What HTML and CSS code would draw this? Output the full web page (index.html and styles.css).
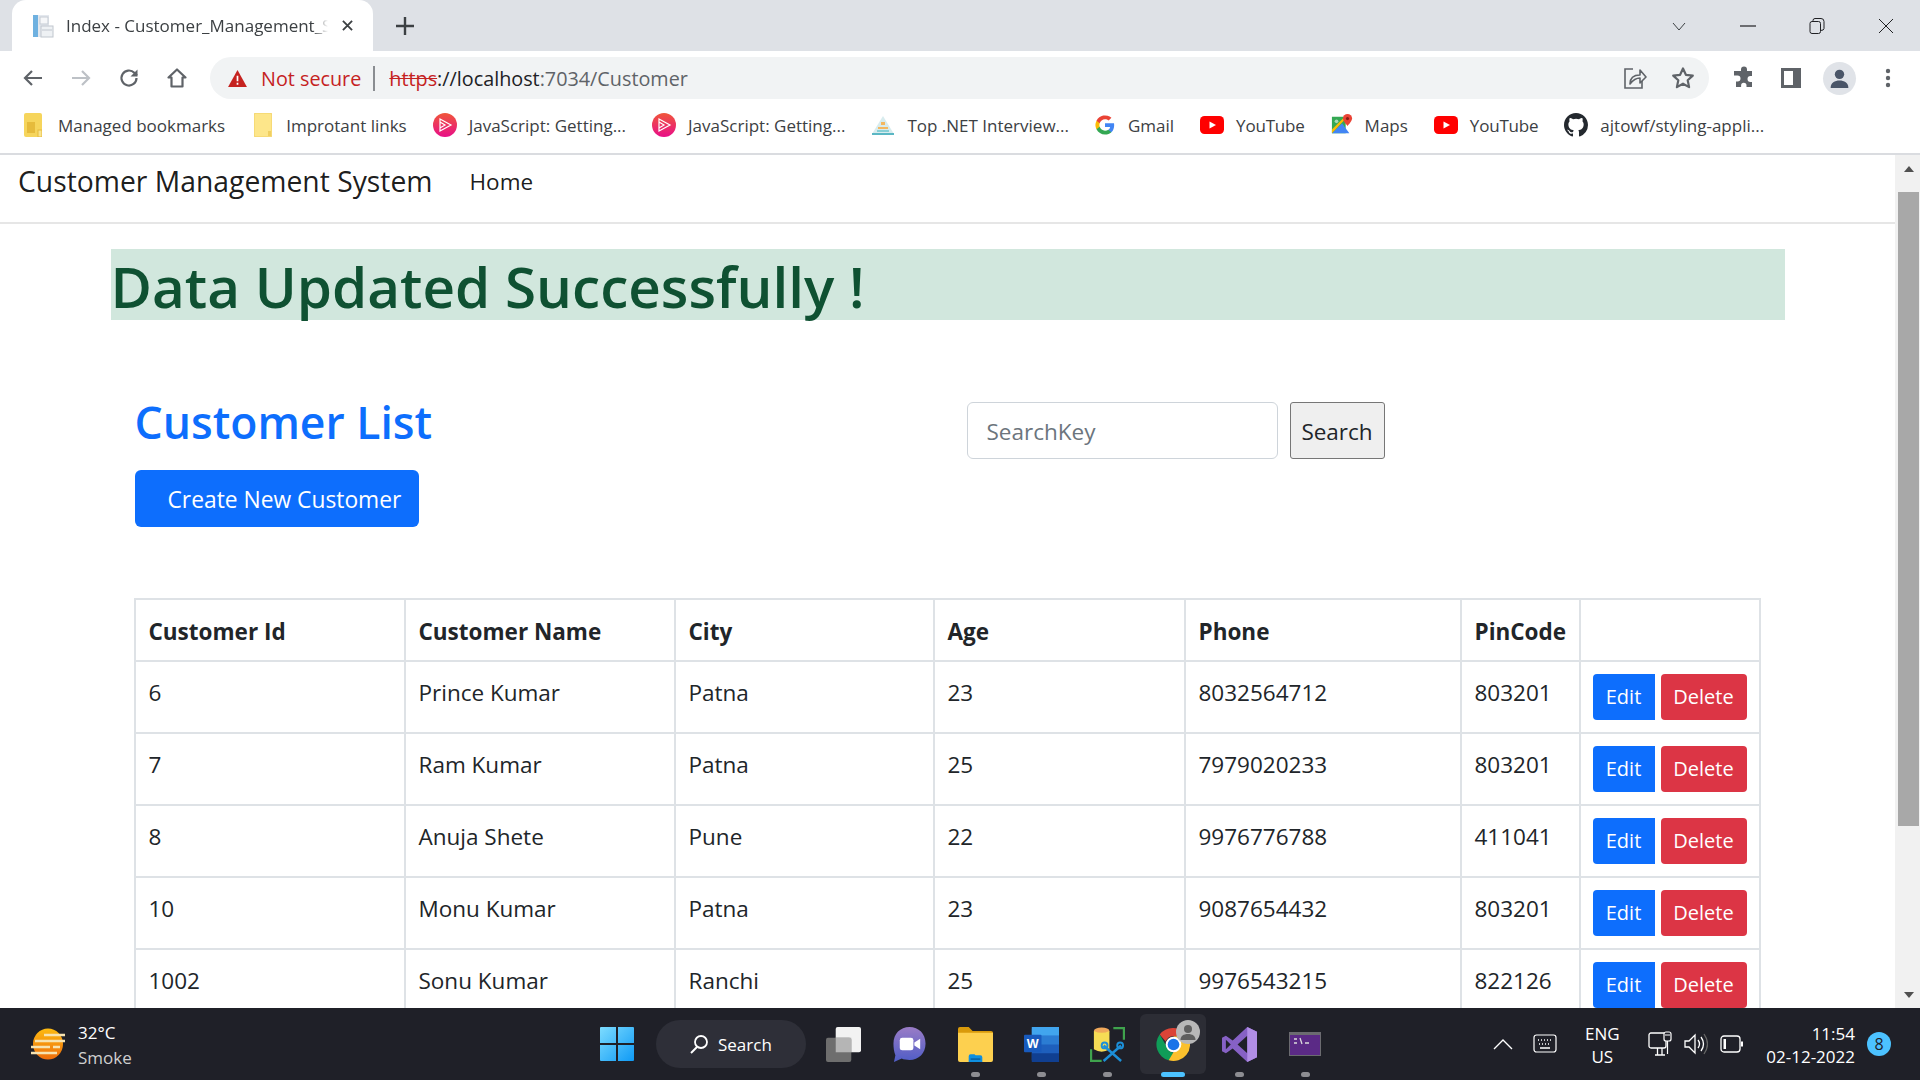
FILE: index.html
```html
<!DOCTYPE html>
<html lang="en">
<head>
    <meta charset="UTF-8">
    <title>Index - Customer_Management_System</title>
    <link rel="stylesheet" href="styles.css">
</head>
<body>
    <!-- Browser tab strip -->
    <div class="tabstrip">
        <div class="tab">
            <svg class="favicon" viewBox="0 0 24 24"><rect x="3" y="1" width="16" height="22" fill="#e4e8ee"/><rect x="3" y="1" width="5" height="22" fill="#6fb1e0"/><rect x="10" y="3" width="8" height="7" fill="#f6f7f9" stroke="#c5cbd3"/><rect x="11" y="12" width="12" height="11" fill="#eef1f4" stroke="#c0c6ce"/><path d="M12 16h10" stroke="#c0c6ce"/></svg>
            <span class="tab-title">Index - Customer_Management_S</span>
            <svg class="tab-close" viewBox="0 0 12 12"><path d="M1 1l10 10M11 1L1 11" stroke="#3c4043" stroke-width="2"/></svg>
        </div>
        <svg class="new-tab" viewBox="0 0 18 18"><path d="M9 0v18M0 9h18" stroke="#3c4043" stroke-width="2.4"/></svg>
        <div class="window-controls">
            <svg viewBox="0 0 16 16"><path d="M2 5l6 7 6-7" fill="none" stroke="#3c4043"/></svg>
            <svg viewBox="0 0 16 16"><path d="M0 8h16" stroke="#202124" stroke-width="1.2"/></svg>
            <svg viewBox="0 0 16 16"><rect x="1" y="3.5" width="10.5" height="12" rx="2" fill="none" stroke="#202124"/><path d="M4 3.5V2.5q0-2 2-2h6q3 0 3 3v7q0 2-3.500 2" fill="none" stroke="#202124"/></svg>
            <svg viewBox="0 0 16 16"><path d="M1 1l14 14M15 1L1 15" stroke="#202124"/></svg>
        </div>
    </div>

    <!-- Address bar -->
    <div class="toolbar">
        <svg class="tool-icon" viewBox="0 0 24 24"><path d="M21 12H4M11 5l-7 7 7 7" fill="none" stroke="#5f6368" stroke-width="2.200"/></svg>
        <svg class="tool-icon" viewBox="0 0 24 24"><path d="M3 12h17M13 5l7 7-7 7" fill="none" stroke="#bdc1c6" stroke-width="2.200"/></svg>
        <svg class="tool-icon" viewBox="0 0 24 24"><path d="M19.500 12a7.500 7.500 0 1 1-2.200-5.300L20 9.500" fill="none" stroke="#5f6368" stroke-width="2.200"/><path d="M20.500 3.500v7h-7z" fill="#5f6368"/></svg>
        <svg class="tool-icon" viewBox="0 0 24 24"><path d="M12 3.500L3.500 11.500H6.500V20.500H17.500V11.500H20.500Z" fill="none" stroke="#5f6368" stroke-width="2.200" stroke-linejoin="round"/></svg>
        <div class="omnibox">
            <svg class="warn-icon" viewBox="0 0 20 18"><path d="M10 0L20 18H0Z" fill="#c5221f"/><path d="M10 6v6M10 13.500v2" stroke="#fff" stroke-width="1.800"/></svg>
            <span class="not-secure">Not secure</span>
            <span class="omni-sep"></span>
            <span class="url"><span class="url-scheme">https</span><span class="url-host">://localhost</span>:7034/Customer</span>
            <svg class="omni-icon omni-share" viewBox="0 0 24 24"><path d="M10 3H2v19h17v-7" fill="none" stroke="#5f6368" stroke-width="1.600"/><path d="M7 18c0-6 4-9 10-9V4l6 7-6 6v-5c-4 0-7 2-10 6z" fill="none" stroke="#5f6368" stroke-width="1.600" stroke-linejoin="round"/></svg>
            <svg class="omni-icon" viewBox="0 0 24 24"><path d="M12 2.500l2.900 6.300 6.900.8-5.100 4.700 1.400 6.800-6.100-3.400-6.100 3.400 1.400-6.800L2.200 9.600l6.900-.8z" fill="none" stroke="#5f6368" stroke-width="2.200" stroke-linejoin="round"/></svg>
        </div>
        <svg class="tool-icon ext" viewBox="0 0 24 24"><path d="M9 4.500a3 3 0 0 1 6 0V6h5v5h-1.500a3 3 0 0 0 0 6H20v5h-5.500v-1.500a2.700 2.700 0 0 0-5.400 0V22H4v-5.500h1.500a3 3 0 0 0 0-6H2V6h7z" fill="#5f6368" transform="translate(1 -1)"/></svg>
        <svg class="tool-icon" viewBox="0 0 24 24"><rect x="2" y="2" width="20" height="20" fill="#5f6368"/><rect x="5" y="5" width="9" height="14" fill="#fff"/></svg>
        <div class="avatar"><svg viewBox="0 0 24 24"><circle cx="12" cy="8" r="4.500" fill="#4a5568"/><path d="M3.500 21c0-5 4-7 8.500-7s8.500 2 8.500 7z" fill="#4a5568"/></svg></div>
        <svg class="tool-icon" viewBox="0 0 24 24"><circle cx="12" cy="5" r="2.200" fill="#5f6368"/><circle cx="12" cy="12" r="2.200" fill="#5f6368"/><circle cx="12" cy="19" r="2.200" fill="#5f6368"/></svg>
    </div>

    <!-- Bookmarks -->
    <div class="bookmarks">
        <a class="bookmark">
            <svg class="bm-folder" viewBox="0 0 18 24"><rect width="18" height="24" rx="2" fill="#f6d55c"/><rect x="3" y="9" width="8" height="11" fill="#e6bb3c"/><rect x="14" y="17" width="4" height="7" fill="#f9e48f" stroke="#e6bb3c"/></svg>
            Managed bookmarks
        </a>
        <a class="bookmark">
            <svg class="bm-folder bm-folder-plain" viewBox="0 0 18 24"><rect width="18" height="24" rx="2" fill="#fde68a" stroke="#f0cf62"/><rect x="14" y="18" width="3" height="5" fill="#f0cf62"/></svg>
            Improtant links
        </a>
        <a class="bookmark">
            <svg class="bm-icon" viewBox="0 0 24 24"><defs><linearGradient id="ps" x1="0" y1="0" x2="0" y2="1"><stop offset="0" stop-color="#f0563a"/><stop offset="1" stop-color="#e80f88"/></linearGradient></defs><circle cx="12" cy="12" r="12" fill="url(#ps)"/><path d="M7 6l11 6-11 6zM7 9l5 3-5 3" fill="none" stroke="#fff" stroke-width="1.200"/></svg>
            JavaScript: Getting...
        </a>
        <a class="bookmark">
            <svg class="bm-icon" viewBox="0 0 24 24"><circle cx="12" cy="12" r="12" fill="url(#ps)"/><path d="M7 6l11 6-11 6zM7 9l5 3-5 3" fill="none" stroke="#fff" stroke-width="1.200"/></svg>
            JavaScript: Getting...
        </a>
        <a class="bookmark">
            <svg class="bm-icon" viewBox="0 0 24 24"><path d="M12 3l11 18H1z" fill="#d8ecee"/><path d="M10 9h4v3h-4z" fill="#f4b860"/><path d="M7 14h10v2H7z" fill="#f4b860"/><path d="M1 20h22v2H1z" fill="#5bb7c4"/><path d="M6 17h12v2H6z" fill="#87cfd6"/></svg>
            Top .NET Interview...
        </a>
        <a class="bookmark">
            <svg class="bm-icon bm-google" viewBox="0 0 24 24"><path d="M23 12.300c0-.800-.1-1.600-.2-2.300H12v4.400h6.200a5.300 5.300 0 0 1-2.300 3.500v2.900h3.700c2.200-2 3.400-5 3.400-8.500z" fill="#4285f4"/><path d="M12 23.500c3.100 0 5.700-1 7.600-2.800l-3.700-2.900c-1 .7-2.300 1.100-3.900 1.100-3 0-5.500-2-6.400-4.700H1.800v3c1.900 3.800 5.800 6.300 10.200 6.300z" fill="#34a853"/><path d="M5.600 14.200a7 7 0 0 1 0-4.400v-3H1.800a11.500 11.500 0 0 0 0 10.400z" fill="#fbbc05"/><path d="M12 5c1.700 0 3.200.6 4.400 1.700l3.300-3.300A11.500 11.500 0 0 0 1.800 6.800l3.800 3C6.500 7 9 5 12 5z" fill="#ea4335"/></svg>
            Gmail
        </a>
        <a class="bookmark bm-yt">
            <svg class="bm-icon" viewBox="0 0 24 24"><rect y="3" width="24" height="18" rx="4.500" fill="#f00"/><path d="M9.500 8.500l6.500 3.500-6.500 3.500z" fill="#fff"/></svg>
            YouTube
        </a>
        <a class="bookmark">
            <svg class="bm-icon bm-maps" viewBox="0 0 24 24"><path d="M1 3h15v18H1z" fill="#34a853"/><path d="M1 21L12 10l8 11z" fill="#4285f4"/><path d="M1 17L15 3h3L1 21z" fill="#fbbc05"/><circle cx="6" cy="8" r="2" fill="#a8dab5"/><path d="M18 0a5 5 0 0 1 5 5c0 3-5 8-5 8s-5-5-5-8a5 5 0 0 1 5-5z" fill="#ea4335"/><circle cx="18" cy="5" r="1.700" fill="#8a1c14"/></svg>
            Maps
        </a>
        <a class="bookmark bm-yt">
            <svg class="bm-icon" viewBox="0 0 24 24"><rect y="3" width="24" height="18" rx="4.500" fill="#f00"/><path d="M9.500 8.500l6.500 3.500-6.500 3.500z" fill="#fff"/></svg>
            YouTube
        </a>
        <a class="bookmark">
            <svg class="bm-icon" viewBox="0 0 16 16"><path d="M8 0C3.580 0 0 3.580 0 8c0 3.540 2.290 6.530 5.470 7.590.4.070.55-.17.55-.38 0-.19-.01-.82-.01-1.490-2.010.37-2.530-.49-2.690-.94-.09-.23-.48-.94-.82-1.130-.28-.15-.68-.52-.01-.53.63-.01 1.080.58 1.230.82.720 1.210 1.870.87 2.330.66.070-.52.280-.87.510-1.070-1.780-.2-3.640-.89-3.640-3.950 0-.87.310-1.590.820-2.150-.08-.2-.36-1.020.08-2.120 0 0 .67-.21 2.200.82a7.500 7.500 0 0 1 4 0c1.530-1.040 2.200-.82 2.200-.82.44 1.100.16 1.920.08 2.120.51.56.82 1.270.82 2.150 0 3.070-1.870 3.750-3.650 3.950.29.250.54.730.54 1.480 0 1.070-.01 1.930-.01 2.200 0 .21.150.46.550.38A8.010 8.010 0 0 0 16 8c0-4.420-3.580-8-8-8z" fill="#24292f"/></svg>
            ajtowf/styling-appli...
        </a>
    </div>

    <div class="viewport">
        <div class="page">
            <nav class="navbar">
                <a class="brand">Customer Management System</a>
                <a class="nav-link">Home</a>
            </nav>

            <div class="container">
                <div class="alert">Data Updated Successfully !</div>

                <div class="content">
                    <div class="list-head">
                        <div class="list-title">
                            <h2>Customer List</h2>
                            <a class="btn btn-create">Create New Customer</a>
                        </div>
                        <form class="search">
                            <input type="text" placeholder="SearchKey">
                            <button type="button">Search</button>
                        </form>
                    </div>

                    <table class="customers">
                        <colgroup>
                            <col class="col-id"><col class="col-name"><col class="col-city"><col class="col-age"><col class="col-phone"><col class="col-pin"><col class="col-actions">
                        </colgroup>
                        <thead>
                            <tr><th>Customer Id</th><th>Customer Name</th><th>City</th><th>Age</th><th>Phone</th><th>PinCode</th><th></th></tr>
                        </thead>
                        <tbody>
                            <tr><td>6</td><td>Prince Kumar</td><td>Patna</td><td>23</td><td>8032564712</td><td>803201</td><td><div class="actions"><a class="btn-sm btn-edit">Edit</a><a class="btn-sm btn-delete">Delete</a></div></td></tr>
                            <tr><td>7</td><td>Ram Kumar</td><td>Patna</td><td>25</td><td>7979020233</td><td>803201</td><td><div class="actions"><a class="btn-sm btn-edit">Edit</a><a class="btn-sm btn-delete">Delete</a></div></td></tr>
                            <tr><td>8</td><td>Anuja Shete</td><td>Pune</td><td>22</td><td>9976776788</td><td>411041</td><td><div class="actions"><a class="btn-sm btn-edit">Edit</a><a class="btn-sm btn-delete">Delete</a></div></td></tr>
                            <tr><td>10</td><td>Monu Kumar</td><td>Patna</td><td>23</td><td>9087654432</td><td>803201</td><td><div class="actions"><a class="btn-sm btn-edit">Edit</a><a class="btn-sm btn-delete">Delete</a></div></td></tr>
                            <tr><td>1002</td><td>Sonu Kumar</td><td>Ranchi</td><td>25</td><td>9976543215</td><td>822126</td><td><div class="actions"><a class="btn-sm btn-edit">Edit</a><a class="btn-sm btn-delete">Delete</a></div></td></tr>
                        </tbody>
                    </table>
                </div>
            </div>
        </div>

        <div class="scrollbar">
            <svg class="scroll-arrow" viewBox="0 0 12 8"><path d="M6 1l5 6H1z" fill="#505050"/></svg>
            <div class="scroll-thumb"></div>
            <svg class="scroll-arrow scroll-down" viewBox="0 0 12 8"><path d="M6 7L1 1h10z" fill="#505050"/></svg>
        </div>
    </div>

    <!-- Windows taskbar -->
    <div class="taskbar">
        <div class="weather">
            <svg class="weather-icon" viewBox="0 0 36 32"><defs><linearGradient id="sun" x1="0" y1="0" x2="0" y2="1"><stop offset="0" stop-color="#fdbb12"/><stop offset="1" stop-color="#ee6c0a"/></linearGradient></defs><ellipse cx="18" cy="16" rx="15" ry="15.500" fill="url(#sun)"/><path d="M14 7h21M5 13h30M1 19h19M23 19h7M1 25h26" stroke="#f7e3b0" stroke-width="2.400"/></svg>
            <div class="weather-text"><div>32°C</div><div class="weather-sub">Smoke</div></div>
        </div>

        <div class="task-start">
            <svg viewBox="0 0 36 36"><defs><linearGradient id="win" x1="0" y1="0" x2="1" y2="1"><stop offset="0" stop-color="#7ddcff"/><stop offset="1" stop-color="#0f9af5"/></linearGradient></defs><path d="M1 2q0-1 1-1h15v16H1zM19 1h15q1 0 1 1v15H19zM1 19h16v16H2q-1 0-1-1zM19 19h16v15q0 1-1 1H19z" fill="url(#win)"/></svg>
        </div>

        <div class="task-search">
            <svg viewBox="0 0 20 20"><circle cx="12" cy="8" r="6" fill="none" stroke="#fff" stroke-width="1.800"/><path d="M8 13l-6 6" stroke="#fff" stroke-width="2"/></svg>
            Search
        </div>

        <div class="task-apps">
            <div class="app">
                <svg viewBox="0 0 36 36"><rect x="10" y="0" width="26" height="26" rx="2" fill="#f2f2f2"/><rect x="0" y="11" width="26" height="25" rx="2" fill="#6e6e6e"/><rect x="10" y="11" width="16" height="15" fill="#b5b5b5"/></svg>
            </div>
            <div class="app">
                <svg viewBox="0 0 36 36"><defs><linearGradient id="teams" x1="0" y1="0" x2="0" y2="1"><stop offset="0" stop-color="#9a7cc6"/><stop offset="1" stop-color="#4f5dc7"/></linearGradient></defs><path d="M18 0c9.500 0 16.500 7 16.500 17S27.500 34 18 34c-3 0-6-.5-8-1.500L2 36l1.500-7C2 25.500 1.500 21 1.500 17 1.500 7 8.500 0 18 0z" fill="url(#teams)"/><rect x="8" y="11" width="14" height="13" rx="2.500" fill="#fff"/><path d="M23 16l6-4v11l-6-4z" fill="#fff"/></svg>
            </div>
            <div class="app has-dot">
                <svg viewBox="0 0 36 36"><path d="M0 2q0-2 2-2h9l4 4h19q2 0 2 2v4H0z" fill="#d99a0b"/><path d="M0 6h36v28q0 2-2 2H2q-2 0-2-2z" fill="#fdd04f"/><path d="M11 30q0-2 2-2h4l1 1h5q2 0 2 2v5H11z" fill="#0f8fe0"/><path d="M13 33h10" stroke="#0b5d9e" stroke-width="1.500"/></svg>
            </div>
            <div class="app has-dot">
                <svg viewBox="0 0 36 36"><rect x="8" y="0" width="28" height="36" rx="2" fill="#1e5fbd"/><rect x="8" y="0" width="28" height="9" fill="#41a5ee"/><rect x="8" y="9" width="28" height="9" fill="#2b7cd3"/><rect x="8" y="27" width="28" height="9" fill="#103f91"/><rect x="0" y="8" width="18" height="18" rx="1" fill="#185abd"/><text x="9" y="22" class="word-mark">W</text></svg>
            </div>
            <div class="app has-dot">
                <svg viewBox="0 0 36 36"><path d="M1 23v12h11M24 1h11v12" fill="none" stroke="#3fa34d" stroke-width="2.500"/><ellipse cx="12" cy="4" rx="8" ry="3.500" fill="#f0a95b"/><path d="M4 4v19q8 5 16 0V4q-8 4-16 0z" fill="#f6dc55"/><path d="M14 19l18 16M32 19L14 35" stroke="#1c8fd8" stroke-width="2.500"/><circle cx="15" cy="19" r="3" fill="none" stroke="#1c8fd8" stroke-width="2"/><circle cx="31" cy="19" r="3" fill="none" stroke="#1c8fd8" stroke-width="2"/></svg>
            </div>
            <div class="app app-active">
                <svg viewBox="0 0 36 36"><path d="M18 1a17 17 0 0 1 14.700 8.500H18a8.500 8.500 0 0 0-8 5.500L3.800 7.700A17 17 0 0 1 18 1z" fill="#db4437"/><path d="M3.800 7.700L11 20.200a8.500 8.500 0 0 0 8 6.200L13 34.300A17 17 0 0 1 3.800 7.700z" fill="#0f9d58"/><path d="M32.700 9.500A17 17 0 0 1 13 34.300l7.500-12.500a8.500 8.500 0 0 0-2.500-12.300z" fill="#fbc02d"/><circle cx="18" cy="18" r="8" fill="#fff"/><circle cx="18" cy="18" r="6" fill="#1a73e8"/></svg>
                <svg class="profile-badge" viewBox="0 0 24 24"><circle cx="12" cy="12" r="12" fill="#b8b8b8"/><circle cx="12" cy="9" r="4" fill="#5f5f5f"/><path d="M4.500 20c0-4 3-6 7.500-6s7.500 2 7.500 6z" fill="#5f5f5f"/></svg>
            </div>
            <div class="app has-dot">
                <svg viewBox="0 0 36 36"><path d="M26 0l10 5v26l-10 5-15-14-7 5-4-2V11l4-2 7 5z" fill="#8661c5"/><path d="M26 9v18l-10-9z" fill="#1f2028"/><path d="M4 13v10l5-5z" fill="#1f2028"/><path d="M26 0l10 5v26l-10 5z" fill="#b18ee6"/></svg>
            </div>
            <div class="app has-dot">
                <svg class="terminal" viewBox="0 0 32 24"><rect width="32" height="24" fill="#6b6b70"/><rect x="1" y="3" width="30" height="20" fill="#5b2a86"/><path d="M5 7h3M5 11h3M11 6l2 6M16 11h4" stroke="#dcdcdc" stroke-width="1.300"/></svg>
            </div>
        </div>

        <div class="tray">
            <svg class="tray-icon tray-chevron" viewBox="0 0 20 12"><path d="M1 11l9-9 9 9" fill="none" stroke="#fff" stroke-width="1.400"/></svg>
            <svg class="tray-icon tray-keyboard" viewBox="0 0 24 20"><rect x="1" y="1" width="22" height="17" rx="2.500" fill="none" stroke="#fff" stroke-width="1.200"/><path d="M5 6h1M8 6h1M11 6h1M14 6h1M17 6h1M6 10h1M9 10h1M12 10h1M15 10h1M7 14h10" stroke="#fff" stroke-width="1.300"/></svg>
            <div class="lang">ENG<br>US</div>
            <svg class="tray-icon tray-net" viewBox="0 0 24 26"><rect x="1" y="2" width="17" height="15" rx="2" fill="none" stroke="#fff" stroke-width="1.300"/><path d="M7 24h10M9.500 17v7M14 17v7" stroke="#fff" stroke-width="1.300"/><rect x="16" y="1" width="7" height="9" rx="2" fill="#1f2028" stroke="#fff" stroke-width="1.200"/><path d="M17 4h5M19.500 10v13" stroke="#fff" stroke-width="1.200"/></svg>
            <svg class="tray-icon tray-vol" viewBox="0 0 24 22"><path d="M1 8h4l6-6v18l-6-6H1z" fill="none" stroke="#fff" stroke-width="1.300"/><path d="M14 7q3 4 0 8M17 4q5 7 0 14" fill="none" stroke="#fff" stroke-width="1.300"/><path d="M20 1q7 10 0 20" fill="none" stroke="#666" stroke-width="1.300"/></svg>
            <svg class="tray-icon tray-bat" viewBox="0 0 24 18"><rect x="1" y="1" width="19" height="16" rx="3" fill="none" stroke="#fff" stroke-width="1.300"/><rect x="3.500" y="4" width="2.500" height="10" fill="#fff"/><rect x="21" y="6.500" width="2" height="5" fill="#fff"/></svg>
            <div class="clock">11:54<br>02-12-2022</div>
            <div class="notif">8</div>
        </div>
    </div>
</body>
</html>
```

FILE: styles.css
```css
* {
    box-sizing: border-box;
}

html, body {
    margin: 0;
    padding: 0;
    height: 1080px;
    overflow: hidden;
}

body {
    display: flex;
    flex-direction: column;
    font-family: "Open Sans", "Liberation Sans", sans-serif;
    background-color: #fff;
    color: #212529;
}

/* Tab strip */
.tabstrip {
    height: 51px;
    flex: none;
    display: flex;
    align-items: center;
    padding-left: 12px;
    background-color: #dee1e6;
}

.tab {
    width: 361px;
    height: 51px;
    display: flex;
    align-items: center;
    padding: 0 18px;
    background-color: #fff;
    border-radius: 14px 14px 0 0;
    font-size: 17px;
    color: #3c4043;
}

.favicon {
    width: 24px;
    height: 24px;
    flex: none;
    margin-right: 12px;
}

.tab-title {
    width: 262px;
    flex: none;
    white-space: nowrap;
    -webkit-mask-image: linear-gradient(to right, #000 94%, transparent);
    mask-image: linear-gradient(to right, #000 94%, transparent);
}

.tab-close {
    width: 11px;
    height: 11px;
    flex: none;
    margin-left: 14px;
}

.new-tab {
    width: 18px;
    height: 18px;
    margin-left: 23px;
}

.window-controls {
    margin-left: auto;
    display: flex;
    align-items: center;
    padding-right: 26px;
    gap: 53px;
}

.window-controls svg {
    width: 16px;
    height: 16px;
}

/* Toolbar */
.toolbar {
    height: 54px;
    flex: none;
    display: flex;
    align-items: center;
    padding: 0 21px;
    background-color: #fff;
}

.tool-icon {
    width: 24px;
    height: 24px;
    flex: none;
    margin-right: 24px;
}

.tool-icon:last-child {
    margin-right: 0;
}

.omnibox {
    width: 1499px;
    height: 42px;
    flex: none;
    margin: 0 22px 0 -3px;
    display: flex;
    align-items: center;
    padding: 0 14px 0 18px;
    background-color: #f1f3f4;
    border-radius: 21px;
    font-size: 19.8px;
    color: #5f6368;
}

.warn-icon {
    width: 19px;
    height: 17px;
    flex: none;
}

.not-secure {
    margin-left: 14px;
    color: #c5221f;
    white-space: nowrap;
}

.omni-sep {
    width: 2px;
    height: 25px;
    margin: 0 14px 0 12px;
    background-color: #8a8d91;
}

.url {
    white-space: nowrap;
}

.url-scheme {
    color: #c5221f;
    text-decoration: line-through;
}

.url-host {
    color: #202124;
}

.omni-icon {
    width: 24px;
    height: 24px;
    flex: none;
}

.omni-share {
    margin-left: auto;
    margin-right: 24px;
}

.avatar {
    width: 33px;
    height: 33px;
    flex: none;
    margin: 0 20px -1px -4px;
    padding: 4px;
    border-radius: 50%;
    background-color: #e0e3e8;
}

.avatar svg {
    display: block;
}

/* Bookmarks */
.bookmarks {
    height: 50px;
    flex: none;
    display: flex;
    align-items: center;
    padding: 0 0 8px 24px;
    gap: 26px;
    background-color: #fff;
    border-bottom: 2px solid #dadce0;
    font-size: 17px;
    color: #3c4043;
}

.bookmark {
    display: flex;
    align-items: center;
    gap: 12px;
    white-space: nowrap;
}

.bm-folder {
    width: 18px;
    height: 24px;
    flex: none;
    margin-right: 4px;
}

.bm-folder-plain {
    margin-left: 3px;
    margin-right: 2px;
}

.bm-icon {
    width: 24px;
    height: 24px;
    flex: none;
}

.bm-google {
    width: 20px;
    height: 20px;
    margin-right: 1px;
}

.bm-maps {
    width: 22px;
}

.bm-yt {
    letter-spacing: -.2px;
}

/* Page */
.viewport {
    height: 853px;
    flex: none;
    display: flex;
    overflow: hidden;
}

.page {
    width: 1895px;
    flex: none;
}

.navbar {
    height: 69px;
    display: flex;
    align-items: center;
    padding: 0 18px 15px;
    gap: 37px;
    background-color: #fff;
    border-bottom: 2px solid #e6e6e6;
    font-size: 22.5px;
}

.brand {
    font-size: 28.3px;
    color: rgba(0, 0, 0, .9);
    white-space: nowrap;
}

.nav-link {
    color: rgba(0, 0, 0, .9);
}

.container {
    width: 1674px;
    margin: 25px auto 0;
}

.alert {
    height: 71px;
    background-color: #d1e7dd;
    color: #0f5132;
    font-size: 56.6px;
    line-height: 75px;
    font-weight: 600;
    white-space: nowrap;
}

.content {
    padding: 0 24px;
}

.list-head {
    display: flex;
    align-items: flex-start;
    padding-top: 73px;
}

.list-title {
    width: 832px;
    flex: none;
}

.list-title h2 {
    margin: 0 0 19px;
    font-size: 44.5px;
    line-height: 58px;
    font-weight: 600;
    color: #0d6efd;
}

.btn {
    display: inline-block;
    height: 57px;
    line-height: 59px;
    font-size: 22.8px;
    border-radius: 6px;
}

.btn-create {
    width: 284px;
    padding-left: 33px;
    background-color: #0d6efd;
    color: #fff;
    white-space: nowrap;
}

.search {
    display: flex;
    gap: 12px;
    margin: 9px 0 0;
}

.search input {
    width: 311px;
    height: 57px;
    padding: 2px 19px 0;
    border: 1px solid #ced4da;
    border-radius: 6px;
    font-family: inherit;
    font-size: 22.5px;
    color: #212529;
}

.search input::placeholder {
    color: #6c757d;
}

.search button {
    width: 95px;
    height: 57px;
    padding: 2px 0 0;
    background-color: #efefef;
    border: 1px solid #767676;
    border-radius: 3px;
    font-family: inherit;
    font-size: 22.5px;
    color: #212529;
}

/* Table */
.customers {
    width: 1625px;
    margin: 71px 0 0 -1px;
    border-collapse: collapse;
    table-layout: fixed;
    font-size: 22.5px;
    line-height: 36px;
}

.col-id { width: 270px; }
.col-name { width: 270px; }
.col-city { width: 259px; }
.col-age { width: 251px; }
.col-phone { width: 276px; }
.col-pin { width: 119px; }
.col-actions { width: 180px; }

.customers th,
.customers td {
    border: 2px solid #dee2e6;
    text-align: left;
    vertical-align: top;
    white-space: nowrap;
}

.customers th {
    padding: 14px 12px 10px 13px;
    font-weight: 700;
}

.customers td {
    padding: 13px 12px 11px 13px;
}

.actions {
    display: flex;
    gap: 6px;
    margin: -1px 0 1px -1px;
}

.btn-sm {
    height: 46px;
    line-height: 46px;
    text-align: center;
    font-size: 20px;
    color: #fff;
}

.btn-edit {
    width: 62px;
    background-color: #0d6efd;
    border-radius: 4px 0 0 4px;
}

.btn-delete {
    width: 86px;
    background-color: #dc3545;
    border-radius: 4px;
}

/* Scrollbar */
.scrollbar {
    width: 25px;
    flex: none;
    display: flex;
    flex-direction: column;
    align-items: center;
    background-color: #f1f1f1;
    padding-left: 2px;
}

.scroll-arrow {
    width: 12px;
    height: 8px;
    flex: none;
    margin-top: 10px;
}

.scroll-thumb {
    width: 21px;
    height: 634px;
    flex: none;
    margin-top: 19px;
    background-color: #a8a8a8;
}

.scroll-down {
    margin-top: auto;
    margin-bottom: 9px;
}

/* Taskbar */
.taskbar {
    height: 72px;
    flex: none;
    display: flex;
    align-items: center;
    background-color: #1f2028;
    color: #fff;
    font-size: 17px;
}

.weather {
    width: 584px;
    flex: none;
    display: flex;
    align-items: center;
    padding-left: 30px;
    gap: 12px;
}

.weather-icon {
    width: 36px;
    height: 32px;
    flex: none;
}

.weather-text {
    line-height: 25px;
    margin-top: 2px;
}

.weather-sub {
    color: #cfcfcf;
}

.task-start {
    width: 66px;
    flex: none;
    display: flex;
    justify-content: center;
}

.task-start svg {
    width: 36px;
    height: 36px;
}

.task-search {
    width: 150px;
    height: 48px;
    flex: none;
    margin: 0 6px;
    display: flex;
    align-items: center;
    padding-left: 33px;
    gap: 9px;
    border-radius: 24px;
    background-color: #2e2f38;
}

.task-search svg {
    width: 20px;
    height: 20px;
}

.task-apps {
    display: flex;
    margin-left: -2px;
}

.app {
    position: relative;
    width: 66px;
    height: 60px;
    flex: none;
    display: flex;
    align-items: center;
    justify-content: center;
}

.app svg {
    width: 35px;
    height: 35px;
}

.app .terminal {
    width: 32px;
    height: 24px;
}

.word-mark {
    font-family: "Liberation Sans", sans-serif;
    font-size: 13px;
    font-weight: 700;
    fill: #fff;
    text-anchor: middle;
}

.has-dot::after {
    content: "";
    position: absolute;
    left: 50%;
    bottom: -3px;
    width: 9px;
    height: 5px;
    margin-left: -4px;
    border-radius: 3px;
    background-color: #8d8d92;
}

.app-active {
    background-color: #2c2d35;
    border-radius: 6px;
}

.app-active::after {
    content: "";
    position: absolute;
    left: 50%;
    bottom: -3px;
    width: 24px;
    height: 5px;
    margin-left: -12px;
    border-radius: 3px;
    background-color: #4cc2ff;
}

.app .profile-badge {
    position: absolute;
    top: 6px;
    right: 6px;
    width: 24px;
    height: 24px;
}

/* Tray */
.tray {
    margin-left: auto;
    display: flex;
    align-items: center;
    padding-right: 29px;
    color: #fff;
}

.tray-icon {
    flex: none;
}

.tray-chevron {
    width: 20px;
    height: 12px;
}

.tray-keyboard {
    width: 24px;
    height: 20px;
    margin-left: 20px;
}

.lang {
    width: 40px;
    margin-left: 25px;
    text-align: center;
    line-height: 23px;
    margin-top: 2px;
}

.tray-net {
    width: 24px;
    height: 26px;
    margin-left: 26px;
}

.tray-vol {
    width: 24px;
    height: 22px;
    margin-left: 12px;
}

.tray-bat {
    width: 24px;
    height: 18px;
    margin-left: 12px;
}

.clock {
    margin-left: 22px;
    text-align: right;
    line-height: 23px;
    margin-top: 2px;
}

.notif {
    width: 24px;
    height: 24px;
    margin-left: 12px;
    border-radius: 50%;
    background-color: #4cc2ff;
    color: #1f2028;
    font-size: 16px;
    line-height: 24px;
    text-align: center;
}
```
